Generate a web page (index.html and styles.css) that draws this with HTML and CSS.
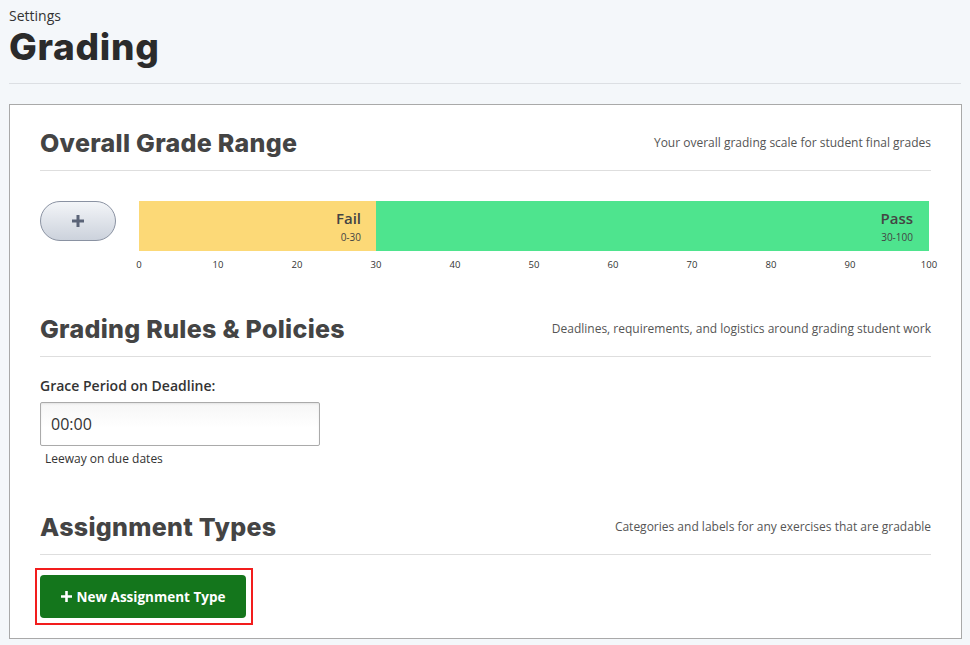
FILE: index.html
```html
<!DOCTYPE html>
<html lang="en">
<head>
<meta charset="utf-8">
<title>Grading Settings</title>
<link rel="stylesheet" href="styles.css">
</head>
<body>
<header class="page-header">
  <div class="crumb">Settings</div>
  <h1 class="page-title">Grading</h1>
</header>
<main class="card">
  <section class="section">
    <div class="section-head">
      <h2 class="section-title">Overall Grade Range</h2>
      <p class="section-desc">Your overall grading scale for student final grades</p>
    </div>
    <div class="range-row">
      <button class="add-grade" type="button" aria-label="Add grade">
        <svg width="12" height="12" viewBox="0 0 12 12"><path d="M4.5 0h3v4.5H12v3H7.5V12h-3V7.5H0v-3h4.5z" fill="#5b6478"/></svg>
      </button>
      <div class="scale">
        <div class="bar">
          <div class="seg seg-fail" style="width:30%"><span class="seg-name">Fail</span><span class="seg-range">0-30</span></div>
          <div class="seg seg-pass" style="width:70%"><span class="seg-name">Pass</span><span class="seg-range">30-100</span></div>
        </div>
        <div class="ticks">
          <span class="tick"><span>0</span></span>
          <span class="tick"><span>10</span></span>
          <span class="tick"><span>20</span></span>
          <span class="tick"><span>30</span></span>
          <span class="tick"><span>40</span></span>
          <span class="tick"><span>50</span></span>
          <span class="tick"><span>60</span></span>
          <span class="tick"><span>70</span></span>
          <span class="tick"><span>80</span></span>
          <span class="tick"><span>90</span></span>
          <span class="tick"><span>100</span></span>
        </div>
      </div>
    </div>
  </section>

  <section class="section section-rules">
    <div class="section-head">
      <h2 class="section-title">Grading Rules &amp; Policies</h2>
      <p class="section-desc">Deadlines, requirements, and logistics around grading student work</p>
    </div>
    <div class="field">
      <label class="field-label" for="grace">Grace Period on Deadline:</label>
      <input class="field-input" id="grace" type="text" value="00:00">
      <div class="field-help">Leeway on due dates</div>
    </div>
  </section>

  <section class="section section-types">
    <div class="section-head">
      <h2 class="section-title">Assignment Types</h2>
      <p class="section-desc">Categories and labels for any exercises that are gradable</p>
    </div>
    <div class="highlight">
      <button class="btn-new" type="button"><svg width="11" height="11" viewBox="0 0 12 12"><path d="M4.6 0h2.8v4.6H12v2.8H7.4V12H4.6V7.4H0V4.6h4.6z" fill="#fff"/></svg>New Assignment Type</button>
    </div>
  </section>
</main>
</body>
</html>
```

FILE: styles.css
```css
* { box-sizing: border-box; }

html, body { margin: 0; padding: 0; }

body {
  background: #f4f7fa;
  font-family: "Open Sans", "Liberation Sans", sans-serif;
  color: #333;
  padding: 6px 9px 6px 9px;
  width: 970px;
}

.page-header {
  border-bottom: 1px solid #dcdfe3;
  padding-bottom: 16px;
}

.crumb {
  font-size: 14px;
  line-height: 20px;
  color: #333;
}

.page-title {
  margin: 1px 0 0;
  font-family: Inter, "DejaVu Sans", sans-serif;
  font-weight: 800;
  font-size: 37px;
  line-height: 40px;
  color: #2b2b2b;
  letter-spacing: 0.7px;
}

.card {
  margin-top: 20px;
  background: #fff;
  border: 1px solid #a9a9a9;
  width: 953px;
  padding: 23px 30px 13px 30px;
}

.section-head {
  display: flex;
  justify-content: space-between;
  align-items: center;
  border-bottom: 1px solid #dedede;
  padding-bottom: 12px;
}

.section-title {
  margin: 0;
  font-family: Inter, "DejaVu Sans", sans-serif;
  font-weight: 800;
  font-size: 25px;
  line-height: 30px;
  color: #444;
  letter-spacing: 0.3px;
}

.section-desc {
  margin: 0;
  font-size: 12px;
  line-height: 16px;
  color: #555;
}

.range-row {
  display: flex;
  align-items: flex-start;
  gap: 23px;
  margin-top: 30px;
}

.add-grade {
  width: 76px;
  height: 40px;
  border-radius: 20px;
  border: 1px solid #8a92a2;
  background: linear-gradient(#f3f5f8, #ccd2dc);
  display: flex;
  align-items: center;
  justify-content: center;
  padding: 0;
}

.scale {
  width: 790px;
}

.bar {
  display: flex;
  height: 50px;
}

.seg {
  display: flex;
  flex-direction: column;
  align-items: flex-end;
  padding: 6px 15px 0 0;
  color: #444;
}

.seg-fail { background: #fcd977; }
.seg-pass { background: #4ee48e; padding-right: 16px; }

.seg-name {
  font-size: 15px;
  line-height: 22px;
  font-weight: 600;
}

.seg-range {
  font-size: 10px;
  line-height: 14px;
  margin-top: 1px;
}

.ticks {
  display: flex;
  justify-content: space-between;
  margin-top: 7px;
  font-size: 9.5px;
  line-height: 14px;
  color: #333;
}

.tick {
  width: 0;
  display: flex;
  justify-content: center;
}

.section-rules { margin-top: 42px; }

.field { padding-top: 19px; }

.field-label {
  display: block;
  font-size: 14px;
  line-height: 20px;
  font-weight: 600;
  color: #333;
}

.field-input {
  display: block;
  margin-top: 6px;
  width: 280px;
  height: 44px;
  border: 1px solid #aaa;
  border-radius: 2px;
  background: linear-gradient(#f6f6f6, #fff 60%);
  box-shadow: inset 0 1px 2px rgba(0,0,0,0.08);
  font-family: "Open Sans", "Liberation Sans", sans-serif;
  font-size: 16px;
  color: #333;
  padding: 0 10px;
}

.field-help {
  margin-top: 5px;
  padding-left: 5px;
  font-size: 12px;
  line-height: 16px;
  color: #333;
}

.section-types { margin-top: 45px; }

.highlight {
  display: inline-block;
  margin-top: 13px;
  margin-left: -5px;
  border: 2px solid #f21d1d;
  padding: 5px 5px 5px 3px;
}

.btn-new {
  display: flex;
  align-items: center;
  gap: 5px;
  height: 43px;
  width: 206px;
  justify-content: center;
  border: none;
  border-radius: 4px;
  background: #14761c;
  color: #fff;
  font-family: "Open Sans", "Liberation Sans", sans-serif;
  font-weight: 700;
  font-size: 13.5px;
}
```
